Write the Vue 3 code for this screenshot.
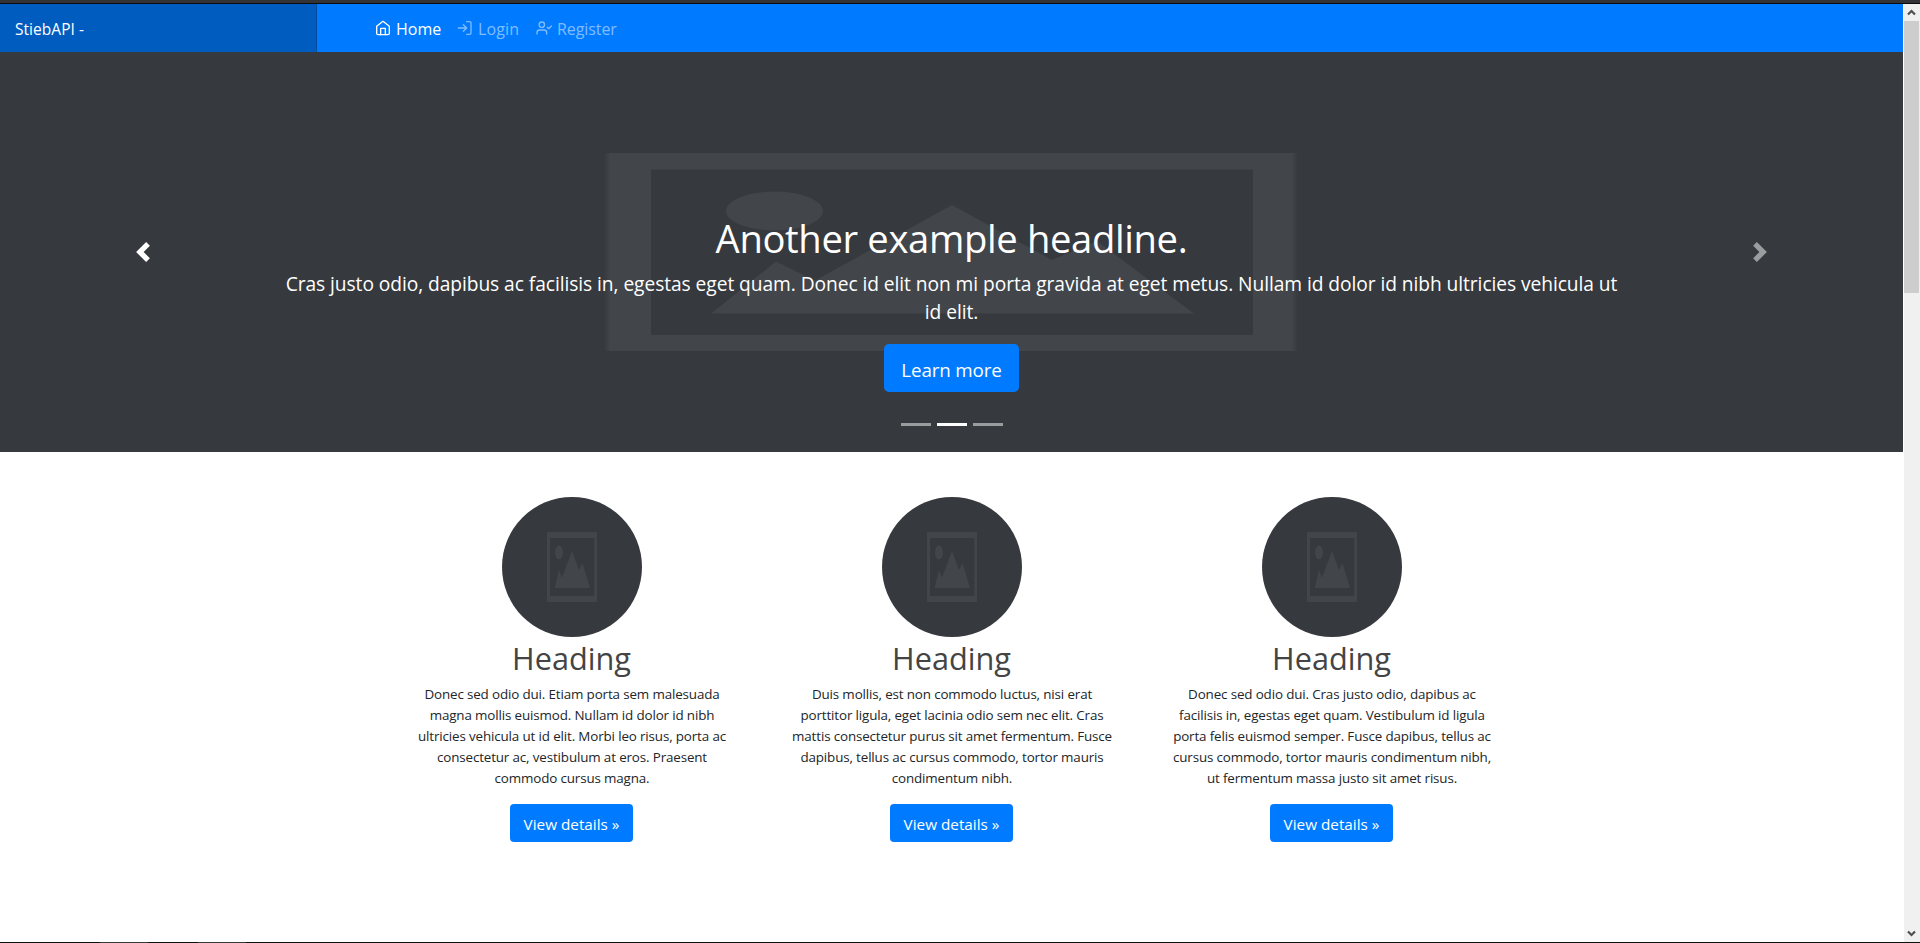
<script setup>
const nav = [
  { label: 'Home', icon: 'home', active: true },
  { label: 'Login', icon: 'login' },
  { label: 'Register', icon: 'register' },
]
const cards = [
  ['Donec sed odio dui. Etiam porta sem malesuada', 'magna mollis euismod. Nullam id dolor id nibh', 'ultricies vehicula ut id elit. Morbi leo risus, porta ac', 'consectetur ac, vestibulum at eros. Praesent', 'commodo cursus magna.'],
  ['Duis mollis, est non commodo luctus, nisi erat', 'porttitor ligula, eget lacinia odio sem nec elit. Cras', 'mattis consectetur purus sit amet fermentum. Fusce', 'dapibus, tellus ac cursus commodo, tortor mauris', 'condimentum nibh.'],
  ['Donec sed odio dui. Cras justo odio, dapibus ac', 'facilisis in, egestas eget quam. Vestibulum id ligula', 'porta felis euismod semper. Fusce dapibus, tellus ac', 'cursus commodo, tortor mauris condimentum nibh,', 'ut fermentum massa justo sit amet risus.'],
]
</script>

<template>
  <div class="window">
    <div class="chrome-top"></div>
    <div class="view">
      <div class="page">
        <header class="navbar">
          <a class="brand"><span>StiebAPI -</span></a>
          <nav class="links">
            <a v-for="n in nav" :key="n.label" class="link" :class="[n.icon, { active: n.active }]">
              <svg class="nav-icon" viewBox="0 0 24 24" fill="none" stroke="currentColor" stroke-width="2" stroke-linecap="round" stroke-linejoin="round">
                <template v-if="n.icon === 'home'">
                  <path d="M2.500 9.500 12 2l9.500 7.500V20a2 2 0 0 1-2 2h-15a2 2 0 0 1-2-2z" />
                  <path d="M8.500 22v-9.500h7V22" />
                </template>
                <template v-else-if="n.icon === 'login'">
                  <path d="M14.500 2.500H19a2 2 0 0 1 2 2v15a2 2 0 0 1-2 2h-4.500" />
                  <path d="M9.500 17l5-5-5-5M14.500 12H2" />
                </template>
                <template v-else>
                  <path d="M16 21v-2a4 4 0 0 0-4-4H5.500a4 4 0 0 0-4 4v2" />
                  <circle cx="8.750" cy="7" r="4" />
                  <path d="M17 11l2 2 4-4" />
                </template>
              </svg>
              <span>{{ n.label }}</span>
            </a>
          </nav>
        </header>

        <section class="hero">
          <svg class="hero-art" viewBox="0 0 692 199">
            <defs>
              <linearGradient id="frameFade" x1="0" x2="1">
                <stop offset="0" stop-color="#424549" stop-opacity="0" />
                <stop offset="0.009" stop-color="#424549" />
                <stop offset="0.991" stop-color="#424549" />
                <stop offset="1" stop-color="#424549" stop-opacity="0" />
              </linearGradient>
            </defs>
            <path fill="url(#frameFade)" fill-rule="evenodd" d="M-2 0h694v198H-2zM45 16.500v165.500h602V16.500z" />
            <ellipse cx="168.500" cy="58" rx="48.500" ry="19.500" fill="#424549" />
            <path fill="#424549" d="M105 160.500L170 108.500 209 127.500 346 52 446 107 491 88 588 160.500z" />
          </svg>
          <div class="caption">
            <h1>Another example headline.</h1>
            <p class="lead"><span>Cras justo odio, dapibus ac facilisis in, egestas eget quam. Donec id elit non mi porta gravida at eget metus. Nullam id dolor id nibh ultricies vehicula ut</span><span>id elit.</span></p>
            <a class="btn large"><span>Learn more</span></a>
          </div>
          <svg class="arrow prev" viewBox="0 0 8 8"><path fill="#fff" d="M5.250 0l-4 4 4 4 1.500-1.500-2.500-2.500 2.500-2.500-1.500-1.500z" /></svg>
          <svg class="arrow next" viewBox="0 0 8 8"><path fill="#fff" d="M2.750 0l-1.500 1.500 2.500 2.500-2.500 2.500 1.500 1.500 4-4-4-4z" /></svg>
          <div class="indicators"><i></i><i class="on"></i><i></i></div>
        </section>

        <main class="cards">
          <article v-for="(lines, i) in cards" :key="i" class="card">
            <svg class="avatar" viewBox="0 0 140 140">
              <circle cx="70" cy="70" r="70" fill="#36393e" />
              <g fill="#424549">
                <path fill-rule="evenodd" d="M45 35h50v70H45zM48 41v58h44.300V41z" />
                <ellipse cx="57" cy="55.500" rx="4" ry="7" />
                <path d="M52.500 91L57 73.500 60 80.500 70 54 77 73 80.500 66 88 91z" />
              </g>
            </svg>
            <h2>Heading</h2>
            <p><span v-for="line in lines" :key="line">{{ line }}</span></p>
            <a class="btn"><span>View details »</span></a>
          </article>
        </main>
      </div>

      <aside class="scrollbar">
        <svg viewBox="0 0 17 17"><path d="M5 10.500L8.500 7l3.500 3.500" /></svg>
        <div class="thumb"></div>
        <svg class="down" viewBox="0 0 17 17"><path d="M5 6.500L8.500 10 12 6.500" /></svg>
      </aside>
    </div>
    <div class="chrome-bottom"><i></i><i></i></div>
  </div>
</template>

<style>
html, body { margin: 0; overflow: hidden; }
</style>

<style scoped>
* { box-sizing: border-box; }
.window { width: 1920px; height: 943px; display: flex; flex-direction: column; overflow: hidden; background: #fff; font-family: "Open Sans", "Noto Sans", sans-serif; color: #212529; }
.chrome-top { height: 4px; flex: none; background: #333336; border-bottom: 1px solid #0c0c0d; }
.view { flex: 1; min-height: 0; display: flex; }
.page { width: 1903px; background: #fff; }
.navbar { height: 48px; display: flex; background: #007bff; }
.brand { width: 317px; padding: 2px 0 0 15px; display: flex; align-items: center; background: #005cbf; border-right: 1px solid #004c9f; color: #fff; font-size: 15.500px; letter-spacing: 0.050px; }
.links { display: flex; padding-left: 58px; }
.link { display: flex; align-items: center; gap: 5px; color: #80bdff; font-size: 16px; white-space: nowrap; }
.link span { padding-top: 2px; }
.link.register { letter-spacing: -0.080px; }
.link.home { width: 82px; }
.link.login { width: 79px; letter-spacing: 0.150px; }
.link.active { color: #fff; }
.nav-icon { width: 16px; height: 16px; flex: none; }

.hero { position: relative; height: 400px; background: #36393e; color: #fff; text-align: center; padding-top: 162px; }
.hero-art { position: absolute; left: 606px; top: 101px; width: 692px; height: 199px; overflow: visible; }
.caption { position: relative; }
h1 { margin: 0; font-size: 38.200px; line-height: 48px; font-weight: 400; letter-spacing: -0.350px; white-space: nowrap; }
.lead { margin: 8px 0 18px; font-size: 19.200px; line-height: 28px; letter-spacing: -0.064px; white-space: nowrap; }
.lead span { display: block; }
.btn { display: inline-flex; align-items: center; justify-content: center; width: 123px; height: 38px; border-radius: 4px; background: #007bff; color: #fff; font-size: 15.300px; white-space: nowrap; padding-top: 2px; }
.btn.large { width: 135px; height: 48px; border-radius: 5px; font-size: 18.800px; letter-spacing: -0.150px; padding-top: 3px; }
.arrow { position: absolute; top: 190px; width: 20px; height: 20px; }
.prev { left: 133px; }
.next { right: 133px; opacity: 0.500; }
.indicators { position: absolute; left: 0; right: 0; top: 371px; display: flex; justify-content: center; gap: 6px; }
.indicators i { width: 30px; height: 3px; background: #9a9c9e; }
.indicators .on { background: #fff; }

.cards { display: flex; justify-content: center; padding-top: 45px; }
.card { width: 380px; text-align: center; }
.avatar { display: block; width: 140px; height: 140px; margin: 0 auto; }
h2 { margin: 0 0 5px; font-size: 30.700px; line-height: 42px; font-weight: 400; color: #444; }
.card p { margin: 0 0 15px; padding-left: 1px; font-size: 13.400px; line-height: 21px; letter-spacing: -0.140px; }
.card p span { display: block; white-space: nowrap; }

.scrollbar { width: 17px; background: #f0f0f0; border-left: 1px solid #fff; display: flex; flex-direction: column; }
.scrollbar svg { width: 17px; height: 17px; flex: none; margin-left: -1px; fill: none; stroke: #505050; stroke-width: 2.200; }
.thumb { width: 15px; height: 272px; background: #cdcdcd; }
.scrollbar .down { margin-top: auto; }
.chrome-bottom { height: 1px; flex: none; display: flex; gap: 50px; padding-left: 100px; background: #0f0f10; }
.chrome-bottom i { width: 48px; height: 1px; background: #38383a; }
</style>
